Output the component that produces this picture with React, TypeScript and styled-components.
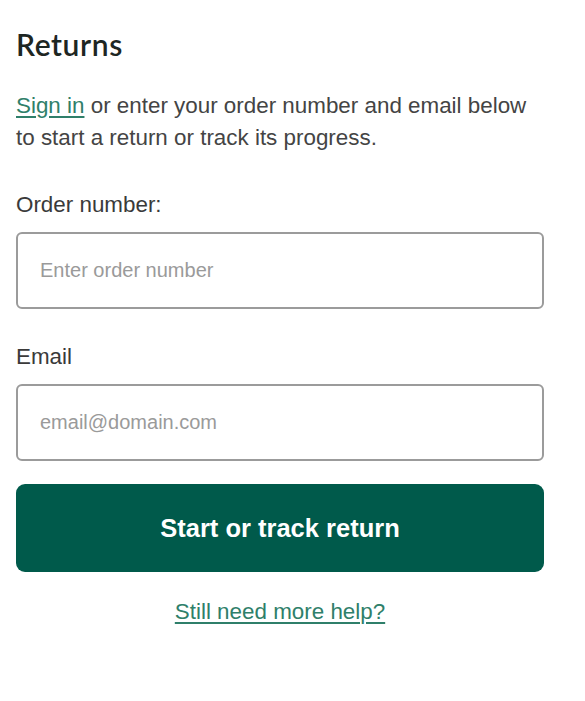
import React from 'react';
import styled, { createGlobalStyle } from 'styled-components';

const GlobalStyle = createGlobalStyle`
  body {
    margin: 0;
    background: #ffffff;
    font-family: 'Liberation Sans', Arial, sans-serif;
  }
`;

const Page = styled.div`
  width: 528px;
  padding: 26px 0 40px 16px;
  display: flex;
  flex-direction: column;
`;

const Title = styled.h1`
  margin: 0;
  font-family: 'Lato', sans-serif;
  font-size: 30px;
  font-weight: 600;
  line-height: 36px;
  color: #1d2623;
  letter-spacing: 0.6px;
`;

const Intro = styled.p`
  margin: 28px 0 0;
  font-size: 22.4px;
  line-height: 32px;
  color: #444444;
`;

const TextLink = styled.a`
  color: #2f7f6a;
  text-decoration: underline;
  text-underline-offset: 3px;
  cursor: pointer;
`;

const Field = styled.label<{ $gap: number }>`
  display: flex;
  flex-direction: column;
  gap: 11px;
  margin-top: ${p => p.$gap}px;
`;

const LabelText = styled.span`
  font-size: 22.4px;
  line-height: 32px;
  color: #3a3a3a;
`;

const Input = styled.input`
  box-sizing: border-box;
  width: 100%;
  height: 77px;
  padding: 0 22px;
  border: 2px solid #9b9b9b;
  border-radius: 6px;
  font-family: 'Liberation Sans', Arial, sans-serif;
  font-size: 20px;
  color: #333333;
  outline: none;

  &::placeholder {
    color: #9a9a9a;
  }
`;

const SubmitButton = styled.button`
  margin-top: 23px;
  height: 88px;
  width: 100%;
  border: none;
  border-radius: 9px;
  background: #005a4b;
  color: #ffffff;
  font-family: 'Liberation Sans', Arial, sans-serif;
  font-size: 25.5px;
  font-weight: 700;
  cursor: pointer;
`;

const HelpRow = styled.div`
  margin-top: 24px;
  text-align: center;
  font-size: 22.4px;
  line-height: 32px;
`;

export default function App() {
  return (
    <>
      <GlobalStyle />
      <Page>
        <Title>Returns</Title>
        <Intro>
          <TextLink>Sign in</TextLink> or enter your order number and email below to start a
          return or track its progress.
        </Intro>
        <Field $gap={35}>
          <LabelText>Order number:</LabelText>
          <Input type="text" placeholder="Enter order number" />
        </Field>
        <Field $gap={32}>
          <LabelText>Email</LabelText>
          <Input type="email" placeholder="email@domain.com" />
        </Field>
        <SubmitButton type="button">Start or track return</SubmitButton>
        <HelpRow>
          <TextLink>Still need more help?</TextLink>
        </HelpRow>
      </Page>
    </>
  );
}
